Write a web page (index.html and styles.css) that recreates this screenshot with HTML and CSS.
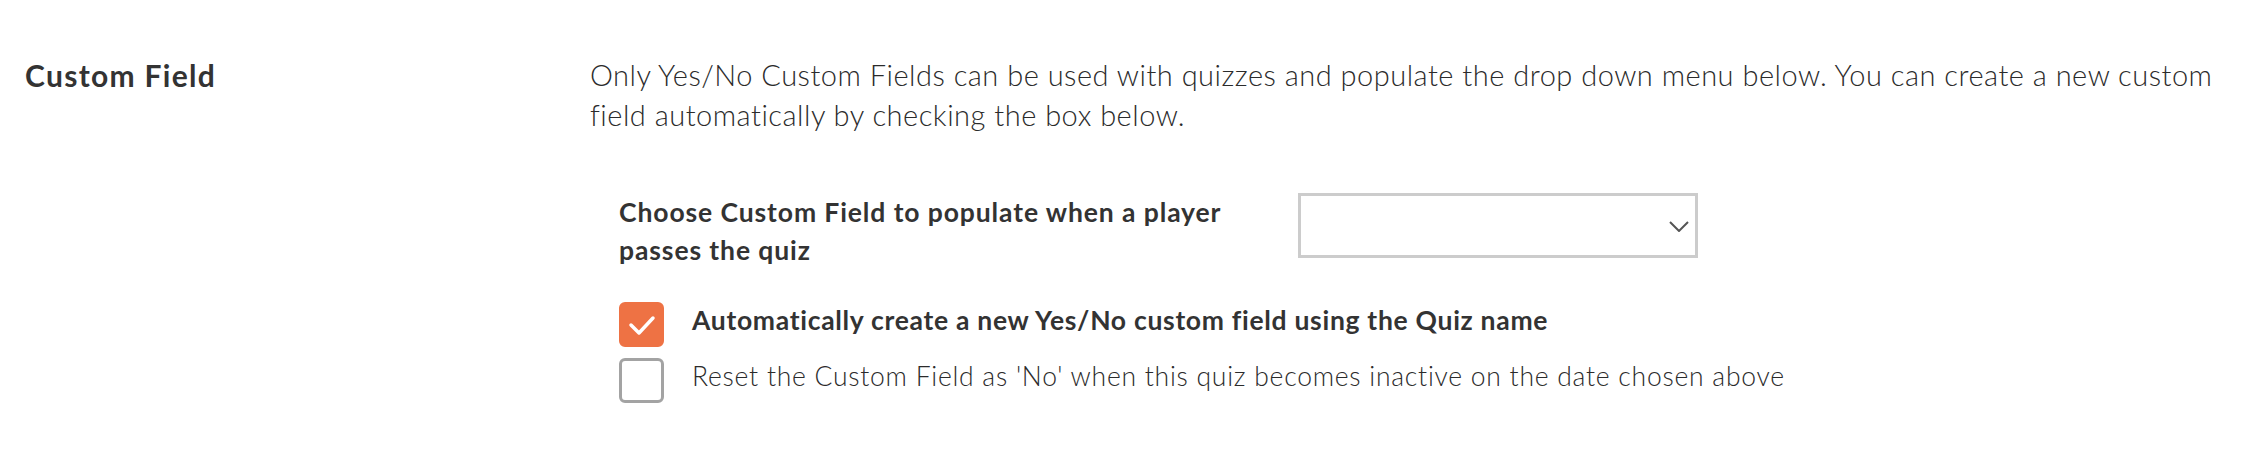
FILE: index.html
```html
<!DOCTYPE html>
<html>
<head>
    <title>Quiz Settings</title>
    <link rel="stylesheet" href="styles.css">
</head>
<body>
    <div class="settings-row">
        <div class="settings-label">
            <h3>Custom Field</h3>
        </div>
        <div class="settings-body">
            <p class="help-text">Only Yes/No Custom Fields can be used with quizzes and populate the drop down menu below. You can create a new custom field automatically by checking the box below.</p>

            <div class="field-block">
                <div class="field-row">
                    <label class="field-label" for="custom_field">Choose Custom Field to populate when a player passes the quiz</label>
                    <div class="select-box" id="custom_field">
                        <svg class="chevron" width="20" height="11" viewBox="0 0 20 11">
                            <polyline points="1,1 10,10 19,1" fill="none" stroke="#555" stroke-width="2"/>
                        </svg>
                    </div>
                </div>

                <div class="check-row">
                    <span class="check-box checked">
                        <svg width="28" height="22" viewBox="0 0 28 22">
                            <polyline points="3,11 11,19 25,4" fill="none" stroke="#fff" stroke-width="3.5" stroke-linecap="round" stroke-linejoin="round"/>
                        </svg>
                    </span>
                    <span class="check-text bold">Automatically create a new Yes/No custom field using the Quiz name</span>
                </div>
                <div class="check-row">
                    <span class="check-box"></span>
                    <span class="check-text">Reset the Custom Field as 'No' when this quiz becomes inactive on the date chosen above</span>
                </div>
            </div>
        </div>
    </div>
</body>
</html>
```

FILE: styles.css
```css
body {
    margin: 0;
    background-color: #fff;
    font-family: Lato, "Liberation Sans", sans-serif;
    font-variant-ligatures: none;
    color: #333;
}

.settings-row {
    display: flex;
    padding: 55px 25px 0 25px;
}

.settings-label {
    width: 565px;
    flex-shrink: 0;
}

.settings-label h3 {
    margin: 0;
    font-size: 30px;
    line-height: 40px;
    font-weight: 700;
    letter-spacing: 1.3px;
    color: #333;
}

.settings-body {
    width: 1650px;
}

.help-text {
    margin: 0;
    font-size: 29px;
    line-height: 40px;
    font-weight: 300;
    letter-spacing: 0.5px;
    color: #2b2b2b;
}

.field-block {
    margin-top: 58px;
    padding-left: 29px;
}

.field-row {
    display: flex;
    align-items: flex-start;
}

.field-label {
    width: 650px;
    font-size: 26.5px;
    line-height: 38px;
    font-weight: 700;
    letter-spacing: 0.9px;
    color: #333;
}

.select-box {
    width: 394px;
    height: 59px;
    border: 3px solid #ccc;
    display: flex;
    justify-content: flex-end;
    align-items: center;
    margin-left: 29px;
}

.chevron {
    margin-right: 6px;
    margin-top: 2px;
}

.check-row {
    display: flex;
    align-items: flex-start;
    margin-top: 11px;
}

.field-row + .check-row {
    margin-top: 33px;
}

.check-box {
    width: 39px;
    height: 39px;
    border: 3px solid #a3a3a3;
    border-radius: 6px;
    display: flex;
    justify-content: center;
    align-items: center;
    flex-shrink: 0;
}

.check-box.checked {
    background-color: #ee7244;
    border-color: #ee7244;
}

.check-text {
    margin-left: 28px;
    font-size: 26.5px;
    line-height: 37px;
    font-weight: 300;
    letter-spacing: 0.75px;
    color: #2b2b2b;
}

.check-text.bold {
    font-weight: 700;
    letter-spacing: 0.7px;
    color: #333;
}
```
